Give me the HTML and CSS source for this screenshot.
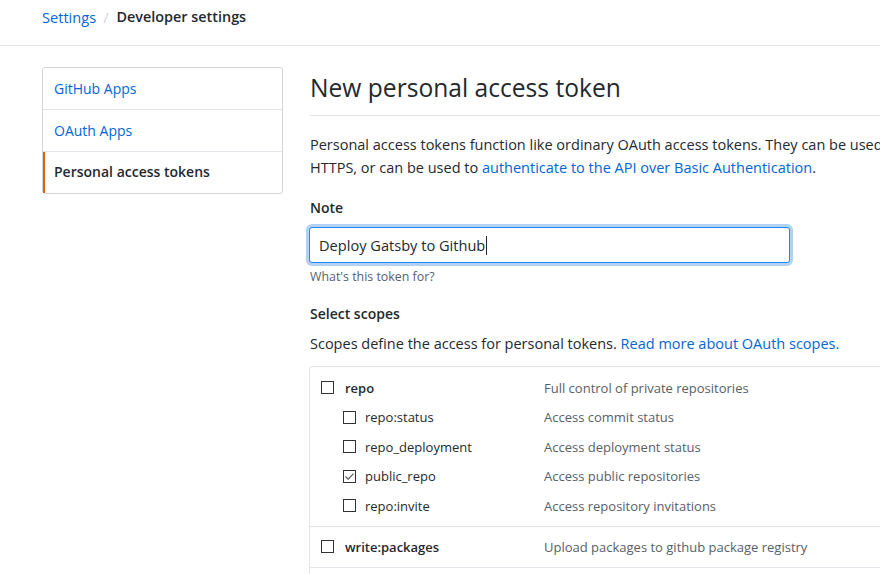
FILE: index.html
```html
<!DOCTYPE html>
<html lang="en">
<head>
<meta charset="utf-8">
<title>Developer settings</title>
<link rel="stylesheet" href="styles.css">
</head>
<body>
<header class="pagehead">
  <nav class="crumbs">
    <a class="crumb-link" href="#">Settings</a>
    <span class="crumb-sep">/</span>
    <strong class="crumb-current">Developer settings</strong>
  </nav>
</header>
<div class="layout">
  <aside class="sidebar">
    <nav class="menu">
      <a class="menu-item" href="#">GitHub Apps</a>
      <a class="menu-item" href="#">OAuth Apps</a>
      <a class="menu-item is-selected" href="#">Personal access tokens</a>
    </nav>
  </aside>
  <main class="content">
    <div class="subhead">
      <h2 class="subhead-title">New personal access token</h2>
    </div>
    <p class="intro">Personal access tokens function like ordinary OAuth access tokens. They can be used instead of a password for Git over HTTPS, or can be used to <a href="#">authenticate to the API over Basic Authentication</a>.</p>
    <div class="field first">
      <div class="field-label">Note</div>
      <div class="text-input"><span class="value">Deploy Gatsby to Github</span><span class="caret"></span></div>
      <p class="note">What's this token for?</p>
    </div>
    <div class="field">
      <div class="field-label">Select scopes</div>
      <p class="scopes-intro">Scopes define the access for personal tokens. <a href="#">Read more about OAuth scopes.</a></p>
      <div class="scopes">
        <div class="scope-group">
          <div class="scope-row">
            <span class="scope-name top"><span class="box"></span>repo</span>
            <span class="scope-desc">Full control of private repositories</span>
          </div>
          <div class="scope-row">
            <span class="scope-name sub"><span class="box"></span>repo:status</span>
            <span class="scope-desc">Access commit status</span>
          </div>
          <div class="scope-row">
            <span class="scope-name sub"><span class="box"></span>repo_deployment</span>
            <span class="scope-desc">Access deployment status</span>
          </div>
          <div class="scope-row">
            <span class="scope-name sub"><span class="box checked"><svg viewBox="0 0 13 13" width="13" height="13"><path d="M2.5 6.5 L5.2 9.2 L10.5 3.6" fill="none" stroke="#555" stroke-width="1.1"/></svg></span>public_repo</span>
            <span class="scope-desc">Access public repositories</span>
          </div>
          <div class="scope-row">
            <span class="scope-name sub"><span class="box"></span>repo:invite</span>
            <span class="scope-desc">Access repository invitations</span>
          </div>
        </div>
        <div class="scope-group single">
          <div class="scope-row">
            <span class="scope-name top"><span class="box"></span>write:packages</span>
            <span class="scope-desc">Upload packages to github package registry</span>
          </div>
        </div>
        <div class="scope-group single">
          <div class="scope-row">
            <span class="scope-name top"><span class="box"></span>read:packages</span>
            <span class="scope-desc">Download packages from github package registry</span>
          </div>
        </div>
      </div>
    </div>
  </main>
</div>
</body>
</html>
```
FILE: styles.css
```css
* { box-sizing: border-box; }
html, body { margin: 0; padding: 0; overflow: hidden; background: #fff; }
body {
  font-family: "Open Sans", "Noto Sans", sans-serif;
  font-size: 14.5px;
  color: #24292e;
  width: 880px;
  height: 574px;
}
a { color: #0366d6; text-decoration: none; }

.pagehead {
  height: 46px;
  border-bottom: 1px solid #e1e4e8;
  padding-left: 42px;
}
.crumbs {
  display: flex;
  align-items: center;
  height: 33px;
  font-size: 14.6px;
  gap: 7px;
}
.crumb-sep { color: #d1d5da; }
.crumb-current { font-weight: 600; margin-left: 1px; font-size: 14.4px; }

.layout {
  display: flex;
  gap: 27px;
  padding: 21px 0 0 42px;
}
.sidebar { width: 241px; flex: none; }
.menu {
  border: 1px solid #d1d5da;
  border-radius: 3px;
  display: flex;
  flex-direction: column;
}
.menu-item {
  display: flex;
  align-items: center;
  height: 42px;
  padding: 0 0 1px 11px;
  font-size: 14px;
  border-bottom: 1px solid #e1e4e8;
}
.menu-item:last-child { border-bottom: 0; height: 41px; padding-bottom: 2px; }
.menu-item.is-selected {
  color: #24292e;
  font-weight: 600;
  border-left: 2px solid #e36209;
  padding-left: 9px;
}

.content { width: 830px; flex: none; }
.subhead {
  border-bottom: 1px solid #e1e4e8;
  height: 49px;
  padding-top: 2px;
}
.subhead-title {
  margin: 0;
  font-size: 24.6px;
  font-weight: 400;
  line-height: 38px;
}
.intro {
  margin: 17px 0 0;
  line-height: 23px;
}
.field { margin-top: 19px; }
.field-label {
  font-weight: 600;
  font-size: 14px;
  line-height: 20px;
}
.text-input {
  display: flex;
  align-items: center;
  margin: 9px 0 0 -1px;
  width: 481px;
  height: 36px;
  padding: 0 9px;
  font-size: 14.6px;
  color: #24292e;
  border: 1px solid #2188ff;
  border-radius: 3px;
  box-shadow: 0 0 0 3px rgba(3, 102, 214, 0.3);
  background: #fff;
}
.caret {
  width: 1px;
  height: 19px;
  margin-left: 1px;
  background: #24292e;
}
.note {
  margin: 5px 0 0;
  font-size: 12.4px;
  line-height: 17px;
  color: #586069;
}
.field + .field { margin-top: 19px; }
.scopes-intro { margin: 10px 0 0; line-height: 20px; }
.scopes {
  margin: 12px 0 0 -1px;
  border: 1px solid #e1e4e8;
  border-radius: 3px;
  font-size: 13px;
}
.scope-group { padding: 6px 0 5px; border-bottom: 1px solid #e1e4e8; }
.scope-group.single { padding: 5px 0; }
.scope-row {
  display: grid;
  grid-template-columns: 234px 1fr;
  height: 29.5px;
  align-items: center;
}
.scope-group.single .scope-row { height: 30px; }
.scope-name {
  display: flex;
  align-items: center;
  gap: 11px;
  padding-left: 11px;
}
.scope-name.top { font-weight: 600; }
.scope-name.sub { padding-left: 33px; gap: 9px; }
.scope-desc { color: #586069; }
.box {
  width: 13px;
  height: 13px;
  border: 1px solid #333;
  background: #fff;
  flex: none;
  display: block;
}
.box svg { display: block; margin: -1px; }
```
